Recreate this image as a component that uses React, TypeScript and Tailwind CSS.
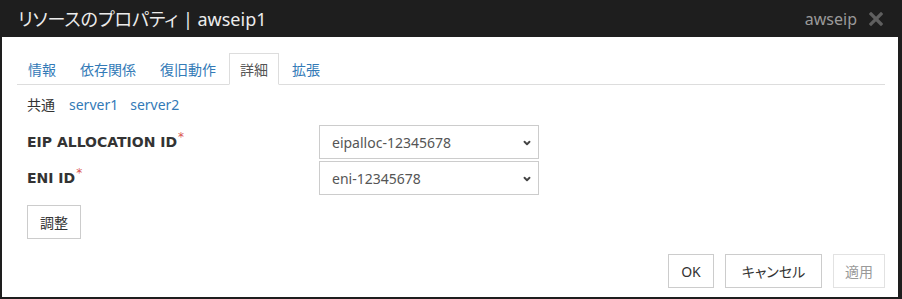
import { ChevronDown } from 'lucide-react';

const tabs = ['情報', '依存関係', '復旧動作', '詳細', '拡張'];
const activeTab = '詳細';

const fields = [
  { label: 'EIP ALLOCATION ID', value: 'eipalloc-12345678' },
  { label: 'ENI ID', value: 'eni-12345678' },
];

const jp = { fontFamily: '"Noto Sans", "Noto Sans CJK JP", sans-serif' };

export default function App() {
  return (
    <div
      className="w-[902px] h-[299px] bg-[#1e1e1e] flex flex-col pl-[2px] pr-[4px] pb-[2px]"
      style={jp}
    >
      {/* title bar */}
      <div className="h-[37px] flex items-center justify-between pl-[16px] pr-[15px]">
        <span className="text-[18px] text-[#ececec] leading-none [font-feature-settings:'palt']">
          リソースのプロパティ | awseip1
        </span>
        <div className="flex items-center gap-[12px]">
          <span className="text-[16px] text-[#9a9a9a] leading-none">awseip</span>
          <svg width="14" height="14" viewBox="0 0 14 14">
            <path d="M2 2 L12 12 M12 2 L2 12" stroke="#5f5f5f" strokeWidth="3.2" strokeLinecap="square" />
          </svg>
        </div>
      </div>

      {/* body */}
      <div className="flex-1 bg-white flex flex-col pl-[15px] pr-[13px] pt-[16px] pb-[9px]">
        <ul className="flex border-b border-[#dddddd]">
          {tabs.map((t) => (
            <li
              key={t}
              className={
                t === activeTab
                  ? 'h-[32px] px-[10px] mr-[2px] -mb-px flex items-center text-[14px] text-[#555555] bg-white border border-[#dddddd] border-b-white'
                  : 'h-[32px] px-[10px] mr-[2px] -mb-px flex items-center text-[14px] text-[#337ab7] border border-transparent'
              }
            >
              {t}
            </li>
          ))}
        </ul>

        <div className="mt-[10px] pl-[10px] flex gap-[14px] text-[14px] leading-[20px]">
          <span className="text-[#333333]">共通</span>
          <div className="flex gap-[12px] text-[#337ab7]">
            <span>server1</span>
            <span>server2</span>
          </div>
        </div>

        <div className="mt-[10px] pl-[10px] flex flex-col gap-[2px]">
          {fields.map((f) => (
            <div key={f.label} className="flex items-center">
              <label
                className="w-[292px] text-[14px] font-bold text-[#333333]"
                style={{ fontFamily: '"DejaVu Sans", Verdana, sans-serif' }}
              >
                {f.label}
                <sup className="text-[#d9534f] font-normal text-[12px] ml-[1px]">*</sup>
              </label>
              <div className="relative w-[220px] h-[34px]">
                <select
                  className="appearance-none w-full h-full border border-[#cccccc] bg-white pl-[12px] text-[14px] text-[#555555] outline-none"
                  defaultValue={f.value}
                >
                  <option>{f.value}</option>
                </select>
                <ChevronDown
                  className="absolute right-[7px] top-[13px] pointer-events-none text-[#444444]"
                  size={10}
                  strokeWidth={4.5}
                />
              </div>
            </div>
          ))}
        </div>

        <div className="mt-[10px] pl-[10px]">
          <button className="h-[34px] w-[54px] border border-[#cccccc] bg-white text-[14px] text-[#333333]">
            調整
          </button>
        </div>

        <div className="mt-auto flex justify-end gap-[11px] [font-feature-settings:'palt']">
          <button className="h-[34px] w-[46px] border border-[#cccccc] bg-white text-[14px] text-[#333333]">
            OK
          </button>
          <button className="h-[34px] w-[97px] border border-[#cccccc] bg-white text-[14px] text-[#333333]">
            キャンセル
          </button>
          <button
            disabled
            className="h-[34px] w-[52px] border border-[#e2e2e2] bg-white text-[14px] text-[#9a9a9a]"
          >
            適用
          </button>
        </div>
      </div>
    </div>
  );
}
